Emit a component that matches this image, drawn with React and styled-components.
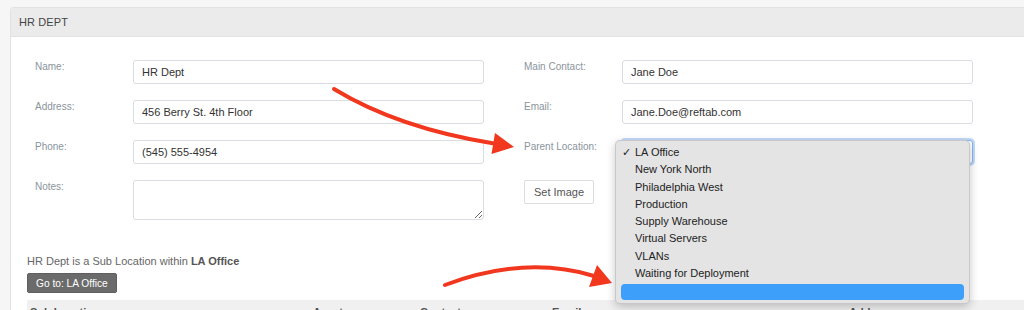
import React from "react";
import styled, { createGlobalStyle } from "styled-components";

const GlobalStyle = createGlobalStyle`
  html, body {
    margin: 0;
    padding: 0;
    background: #f6f6f6;
    font-family: "Liberation Sans", Arial, sans-serif;
    color: #333;
    overflow: hidden;
  }
`;

const Page = styled.div`
  position: relative;
  width: 1024px;
  height: 310px;
  overflow: hidden;
  padding-top: 7px;
  box-sizing: border-box;
`;

const Panel = styled.section`
  margin-left: 10px;
  width: 1040px;
  background: #fff;
  border: 1px solid #e1e1e1;
  border-radius: 3px 0 0 0;
`;

const PanelHeader = styled.header`
  height: 28px;
  display: flex;
  align-items: center;
  padding-left: 8px;
  background: #ebebeb;
  border-bottom: 1px solid #e2e2e2;
  font-size: 11px;
  color: #444;
  letter-spacing: 0.1px;
`;

const PanelBody = styled.div`
  padding: 23px 16px 0;
`;

const FormGrid = styled.div`
  display: grid;
  grid-template-columns: 449px 449px;
  column-gap: 40px;
  padding-left: 8px;
`;

const Column = styled.div`
  display: flex;
  flex-direction: column;
  gap: 16px;
`;

const Row = styled.div`
  display: flex;
  align-items: flex-start;
`;

const Label = styled.label`
  width: 98px;
  flex: none;
  font-size: 10px;
  line-height: 14px;
  color: #8a949c;
`;

const fieldBase = `
  box-sizing: border-box;
  width: 351px;
  border: 1px solid #d9dce1;
  border-radius: 3px;
  background: #fff;
  font-family: "Liberation Sans", Arial, sans-serif;
  font-size: 11px;
  color: #333;
  padding: 0 8px;
  outline: none;
`;

const Input = styled.input`
  ${fieldBase}
  height: 24px;
`;

const TextArea = styled.textarea`
  ${fieldBase}
  height: 40px;
  padding: 6px 8px;
  resize: vertical;
`;

const SelectWrap = styled.div`
  position: relative;
  width: 351px;
`;

const SelectBox = styled.div`
  box-sizing: border-box;
  height: 24px;
  border: 1px solid #86b7f2;
  border-radius: 3px;
  box-shadow: 0 0 0 2px rgba(120, 170, 240, 0.45);
  background: #fff;
  display: flex;
  align-items: center;
  justify-content: flex-end;
  padding-right: 3px;
  font-size: 6px;
  color: #666;
`;

const Popup = styled.ul`
  position: absolute;
  top: 0;
  left: -7px;
  width: 355px;
  box-sizing: border-box;
  margin: 0;
  padding: 3px 5px 3px;
  list-style: none;
  background: #e4e4e4;
  border: 1px solid rgba(0, 0, 0, 0.12);
  border-radius: 5px;
  box-shadow: 0 3px 10px rgba(0, 0, 0, 0.22);
  z-index: 5;
`;

const Option = styled.li`
  position: relative;
  line-height: 17.3px;
  padding-left: 14px;
  font-size: 11px;
  color: #222;
  border-radius: 4px;
  background: ${(p) => (p.$highlighted ? "#3d9ffa" : "transparent")};
  margin-top: ${(p) => (p.$highlighted ? "1.5px" : "0")};
  height: ${(p) => (p.$highlighted ? "16px" : "17.3px")};
`;

const Check = styled.span`
  position: absolute;
  left: 1px;
  top: 0;
  font-family: "DejaVu Sans", sans-serif;
  font-size: 11px;
  font-weight: bold;
`;

const GhostButton = styled.button`
  box-sizing: border-box;
  width: 70px;
  height: 24px;
  background: #fff;
  border: 1px solid #dcdcdc;
  border-radius: 2px;
  font-family: "Liberation Sans", Arial, sans-serif;
  font-size: 11px;
  color: #555;
  padding: 0;
`;

const SubNote = styled.p`
  margin: 35px 0 0;
  font-size: 11px;
  line-height: 13px;
  color: #666;

  strong {
    color: #555;
  }
`;

const DarkButton = styled.button`
  margin-top: 5px;
  height: 20px;
  padding: 0 8px;
  background: #6b6b6b;
  border: 1px solid #5f5f5f;
  border-radius: 2px;
  color: #fff;
  font-family: "Liberation Sans", Arial, sans-serif;
  font-size: 10.2px;
`;

const TableHead = styled.div`
  margin-top: 7px;
  height: 30px;
  background: #f0f0f0;
  display: grid;
  grid-template-columns: 283px 107px 132px 297px 1fr;
  padding: 6px 0 0 3px;
  box-sizing: border-box;
  font-size: 11px;
  font-weight: bold;
  color: #555;
`;

const Arrows = styled.svg`
  position: absolute;
  top: 0;
  left: 0;
  pointer-events: none;
  z-index: 10;
`;

const options = [
  "LA Office",
  "New York North",
  "Philadelphia West",
  "Production",
  "Supply Warehouse",
  "Virtual Servers",
  "VLANs",
  "Waiting for Deployment",
];

export default function App() {
  return (
    <>
      <GlobalStyle />
      <Page>
        <Panel>
          <PanelHeader>HR DEPT</PanelHeader>
          <PanelBody>
            <FormGrid>
              <Column>
                <Row>
                  <Label>Name:</Label>
                  <Input defaultValue="HR Dept" />
                </Row>
                <Row>
                  <Label>Address:</Label>
                  <Input defaultValue="456 Berry St. 4th Floor" />
                </Row>
                <Row>
                  <Label>Phone:</Label>
                  <Input defaultValue="(545) 555-4954" />
                </Row>
                <Row>
                  <Label>Notes:</Label>
                  <TextArea />
                </Row>
              </Column>
              <Column>
                <Row>
                  <Label>Main Contact:</Label>
                  <Input defaultValue="Jane Doe" />
                </Row>
                <Row>
                  <Label>Email:</Label>
                  <Input defaultValue="Jane.Doe@reftab.com" />
                </Row>
                <Row>
                  <Label>Parent Location:</Label>
                  <SelectWrap>
                    <SelectBox>▾</SelectBox>
                    <Popup>
                      {options.map((o, i) => (
                        <Option key={o}>
                          {i === 0 && <Check>✓</Check>}
                          {o}
                        </Option>
                      ))}
                      <Option $highlighted />
                    </Popup>
                  </SelectWrap>
                </Row>
                <Row>
                  <GhostButton>Set Image</GhostButton>
                </Row>
              </Column>
            </FormGrid>
            <SubNote>
              HR Dept is a Sub Location within <strong>LA Office</strong>
            </SubNote>
            <DarkButton>Go to: LA Office</DarkButton>
            <TableHead>
              <span>Sub Location</span>
              <span>Assets</span>
              <span>Contact</span>
              <span>Email</span>
              <span>Address</span>
            </TableHead>
          </PanelBody>
        </Panel>
        <Arrows width="1024" height="310" viewBox="0 0 1024 310">
          <path
            d="M334 89 Q 398 128 494 143.5"
            fill="none"
            stroke="#f2371f"
            strokeWidth="4"
            strokeLinecap="round"
          />
          <polygon points="514,147 491.5,154 495,133" fill="#f2371f" />
          <path
            d="M445 285 Q 525 255 594 276"
            fill="none"
            stroke="#f2371f"
            strokeWidth="4"
            strokeLinecap="round"
          />
          <polygon points="612,283 589,287 597,265" fill="#f2371f" />
        </Arrows>
      </Page>
    </>
  );
}
